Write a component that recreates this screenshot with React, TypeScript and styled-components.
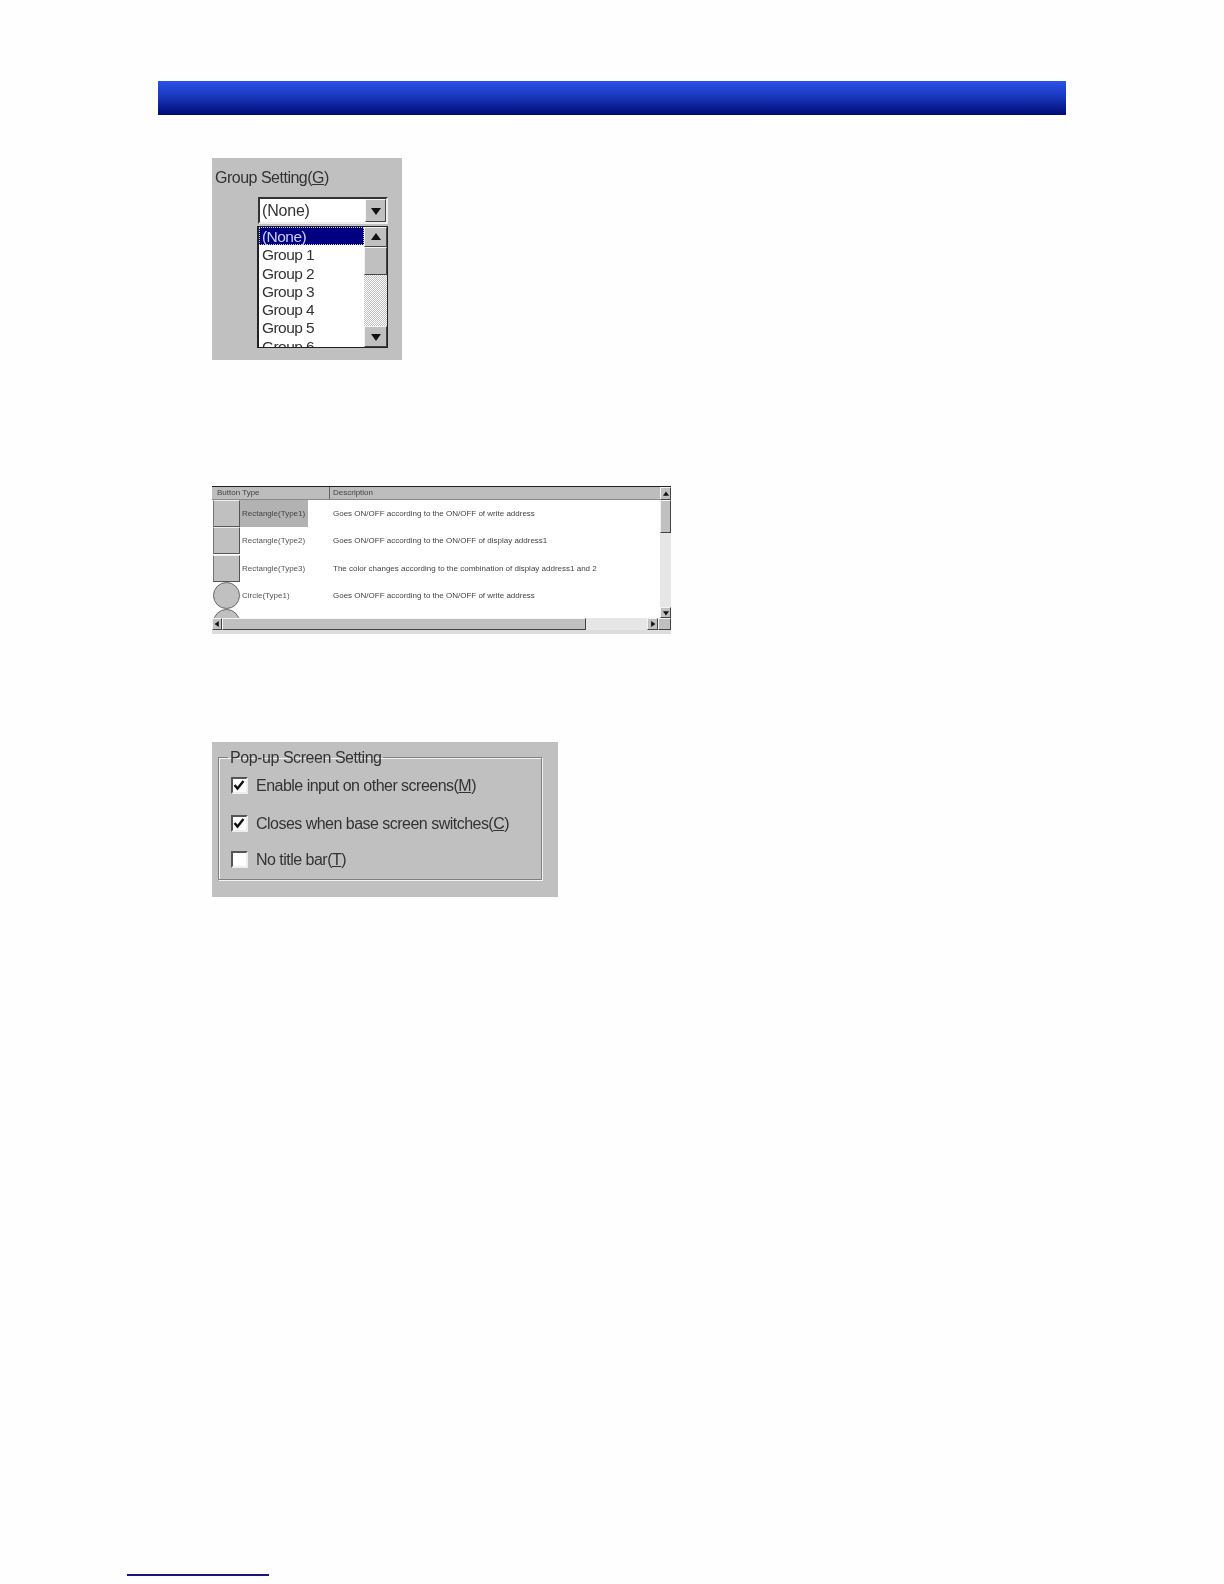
import React from "react";
import styled, { createGlobalStyle } from "styled-components";

const Global = createGlobalStyle`
  html, body { margin: 0; padding: 0; background: #fefefe; }
  * { box-sizing: border-box; }
`;

const Page = styled.div`
  width: 1224px;
  height: 1584px;
  padding-top: 81px;
  display: flex;
  flex-direction: column;
  overflow: hidden;
  font-family: "Liberation Sans", Arial, sans-serif;
  color: #333;
`;

const HeaderBar = styled.div`
  width: 908px;
  height: 34px;
  margin-left: 158px;
  flex: none;
  background: linear-gradient(#2a52ea 0%, #1c3bc4 40%, #0a1f96 75%, #000c74 100%);
`;

const Shot = styled.div<{ $w: number; $h: number; $top: number }>`
  width: ${(p) => p.$w}px;
  height: ${(p) => p.$h}px;
  margin: ${(p) => p.$top}px 0 0 212px;
  background: #c0c0c0;
  flex: none;
  overflow: hidden;
  filter: blur(0.4px);
`;

/* Group setting panel */
const GroupPanel = styled(Shot)`
  padding: 10px 0 0 3px;
  display: flex;
  flex-direction: column;
  font-size: 16px;
`;
const Label = styled.div`
  height: 20px;
  line-height: 20px;
  letter-spacing: -0.5px;
`;
const Key = styled.span`
  text-decoration: underline;
`;
const Combo = styled.div`
  width: 130px;
  height: 27px;
  margin: 9px 0 0 43px;
  background: #fff;
  border: 2px solid #333;
  border-right-color: #eee;
  border-bottom-color: #eee;
  display: flex;
  align-items: center;
  justify-content: space-between;
  padding: 0 0 0 2px;
  font-size: 16px;
  letter-spacing: -0.2px;
`;
const ListBox = styled.div`
  width: 131px;
  height: 122px;
  margin: 2px 0 0 42px;
  background: #fff;
  border: 1px solid #222;
  border-left-width: 2px;
  display: flex;
  overflow: hidden;
`;
const Options = styled.div`
  flex: 1;
  overflow: hidden;
`;
const Option = styled.div<{ $active?: boolean }>`
  height: 18.3px;
  line-height: 20.3px;
  padding-left: 3px;
  font-size: 15.5px;
  letter-spacing: -0.55px;
  color: ${(p) => (p.$active ? "#c9d0ff" : "#333")};
  background: ${(p) => (p.$active ? "#000080" : "#fff")};
  outline: ${(p) => (p.$active ? "1px dotted #c8c8e8" : "none")};
  outline-offset: -1px;
`;
const VBar = styled.div<{ $w: number; $flat?: boolean }>`
  width: ${(p) => p.$w}px;
  flex: none;
  display: flex;
  flex-direction: column;
  background: ${(p) =>
    p.$flat ? "#e6e6e6" : "repeating-conic-gradient(#fff 0 25%, #c0c0c0 0 50%) 0 0 / 2px 2px"};
`;
const BevelButton = styled.div<{ $w?: number; $h?: number }>`
  width: ${(p) => (p.$w ? `${p.$w}px` : "auto")};
  height: ${(p) => (p.$h ? `${p.$h}px` : "auto")};
  flex: none;
  background: #c0c0c0;
  border: 1px solid;
  border-color: #f4f4f4 #444 #444 #f4f4f4;
  display: flex;
  align-items: center;
  justify-content: center;
`;
const Track = styled.div`
  flex: 1;
`;

const Arrow = ({ dir, size }: { dir: "up" | "down" | "left" | "right"; size: number }) => {
  const pts = {
    up: "5,1 10,8 0,8",
    down: "0,2 10,2 5,9",
    left: "8,0 8,10 1,5",
    right: "2,0 2,10 9,5",
  }[dir];
  return (
    <svg width={size} height={size} viewBox="0 0 10 10" aria-hidden="true">
      <polygon points={pts} fill="#111" />
    </svg>
  );
};

/* Button type table */
const TablePanel = styled(Shot)`
  background: #fff;
  border-top: 1.5px solid #222;
  border-bottom: 4px solid #dcdcdc;
  display: flex;
  flex-direction: column;
  filter: blur(0.6px);
`;
const TableMain = styled.div`
  flex: 1;
  min-height: 0;
  display: flex;
`;
const TableBody = styled.div`
  flex: 1;
  min-width: 0;
  display: flex;
  flex-direction: column;
  overflow: hidden;
`;
const HeadRow = styled.div`
  height: 13px;
  flex: none;
  display: flex;
  background: #bdbdbd;
  border-bottom: 1.5px solid #8a8a8a;
  font-size: 8px;
  line-height: 11px;
  color: #444;
`;
const HeadCell = styled.div<{ $w?: number }>`
  width: ${(p) => (p.$w ? `${p.$w}px` : "auto")};
  flex: ${(p) => (p.$w ? "none" : "1")};
  padding-left: ${(p) => (p.$w ? 5 : 3)}px;
  border-right: ${(p) => (p.$w ? "1px solid #666" : "none")};
`;
const Row = styled.div`
  height: 27.3px;
  flex: none;
  display: flex;
  align-items: center;
  font-size: 8px;
  color: #444;
`;
const Swatch = styled.div<{ $round?: boolean }>`
  width: 27px;
  height: 27px;
  margin-left: 1px;
  flex: none;
  background: #c0c0c0;
  border: 1.5px solid;
  border-color: #eee #555 #555 #777;
  ${(p) => p.$round && "border-radius: 50%; border: 1.5px solid #666;"}
`;
const NameCell = styled.div<{ $selected?: boolean }>`
  width: 68px;
  height: 27px;
  line-height: 27px;
  padding-left: 2px;
  flex: none;
  white-space: nowrap;
  background: ${(p) => (p.$selected ? "#b2b2b2" : "transparent")};
  color: ${(p) => (p.$selected ? "#444" : "#555")};
`;
const DescCell = styled.div`
  margin-left: 25px;
  white-space: nowrap;
`;
const HBarRow = styled.div`
  height: 12px;
  flex: none;
  display: flex;
  background: #e6e6e6;
`;
const HTrack = styled.div`
  flex: 1;
`;

/* Pop-up panel */
const PopupPanel = styled(Shot)`
  padding: 6px 16px 0 6px;
  font-size: 16px;
`;
const Group = styled.fieldset`
  margin: 0;
  padding: 0 0 0 12px;
  height: 132px;
  border: 1px solid #808080;
  box-shadow: 1px 1px 0 #f4f4f4, inset 1px 1px 0 #f4f4f4;
  display: flex;
  flex-direction: column;
`;
const Legend = styled.legend`
  padding: 0 1px 0 2px;
  margin-left: -3px;
  height: 19px;
  line-height: 19px;
  letter-spacing: -0.45px;
`;
const CheckRow = styled.div<{ $top: number }>`
  display: flex;
  align-items: center;
  gap: 8px;
  height: 18px;
  margin-top: ${(p) => p.$top}px;
  letter-spacing: -0.52px;
`;
const CheckBox = styled.div`
  width: 17px;
  height: 17px;
  margin-bottom: 2px;
  background: #fff;
  border: 2px solid;
  border-color: #555 #eee #eee #555;
  display: flex;
  align-items: center;
  justify-content: center;
`;

const Spacer = styled.div`
  flex: 1;
`;
const FootRule = styled.div`
  width: 142px;
  height: 2px;
  margin: 0 0 8px 127px;
  flex: none;
  background: #1a1480;
`;

const Check = () => (
  <svg width="13" height="13" viewBox="0 0 13 13" aria-hidden="true">
    <path d="M1.5 6 L4.5 9.5 L10.5 2" fill="none" stroke="#111" strokeWidth="2.4" />
  </svg>
);

const rows = [
  { name: "Rectangle(Type1)", desc: "Goes ON/OFF according to the ON/OFF of write address", selected: true },
  { name: "Rectangle(Type2)", desc: "Goes ON/OFF according to the ON/OFF of display address1" },
  { name: "Rectangle(Type3)", desc: "The color changes according to the combination of display address1 and 2" },
  { name: "Circle(Type1)", desc: "Goes ON/OFF according to the ON/OFF of write address", round: true },
  { name: "", desc: "", round: true },
];

const groups = ["Group 1", "Group 2", "Group 3", "Group 4", "Group 5", "Group 6"];

export default function App() {
  return (
    <Page>
      <Global />
      <HeaderBar />

      <GroupPanel $w={190} $h={202} $top={43}>
        <Label>
          Group Setting(<Key>G</Key>)
        </Label>
        <Combo>
          (None)
          <BevelButton $w={21} $h={23}>
            <Arrow dir="down" size={10} />
          </BevelButton>
        </Combo>
        <ListBox>
          <Options>
            <Option $active>(None)</Option>
            {groups.map((g) => (
              <Option key={g}>{g}</Option>
            ))}
          </Options>
          <VBar $w={23}>
            <BevelButton $h={20}>
              <Arrow dir="up" size={10} />
            </BevelButton>
            <BevelButton $h={28} />
            <Track />
            <BevelButton $h={21}>
              <Arrow dir="down" size={10} />
            </BevelButton>
          </VBar>
        </ListBox>
      </GroupPanel>

      <TablePanel $w={459} $h={148} $top={126}>
        <TableMain>
          <TableBody>
            <HeadRow>
              <HeadCell $w={118}>Button Type</HeadCell>
              <HeadCell>Description</HeadCell>
            </HeadRow>
            {rows.map((r, i) => (
              <Row key={i}>
                <Swatch $round={r.round} />
                <NameCell $selected={r.selected}>{r.name}</NameCell>
                <DescCell>{r.desc}</DescCell>
              </Row>
            ))}
          </TableBody>
          <VBar $w={11} $flat>
            <BevelButton $h={13}>
              <Arrow dir="up" size={6} />
            </BevelButton>
            <BevelButton $h={33} />
            <Track />
            <BevelButton $h={11}>
              <Arrow dir="down" size={6} />
            </BevelButton>
          </VBar>
        </TableMain>
        <HBarRow>
          <BevelButton $w={10}>
            <Arrow dir="left" size={6} />
          </BevelButton>
          <BevelButton $w={364} />
          <HTrack />
          <BevelButton $w={11}>
            <Arrow dir="right" size={6} />
          </BevelButton>
          <BevelButton $w={13} />
        </HBarRow>
      </TablePanel>

      <PopupPanel $w={346} $h={155} $top={108}>
        <Group>
          <Legend>Pop-up Screen Setting</Legend>
          <CheckRow $top={10}>
            <CheckBox>
              <Check />
            </CheckBox>
            <span>
              Enable input on other screens(<Key>M</Key>)
            </span>
          </CheckRow>
          <CheckRow $top={20}>
            <CheckBox>
              <Check />
            </CheckBox>
            <span>
              Closes when base screen switches(<Key>C</Key>)
            </span>
          </CheckRow>
          <CheckRow $top={18}>
            <CheckBox />
            <span>
              No title bar(<Key>T</Key>)
            </span>
          </CheckRow>
        </Group>
      </PopupPanel>

      <Spacer />
      <FootRule />
    </Page>
  );
}
